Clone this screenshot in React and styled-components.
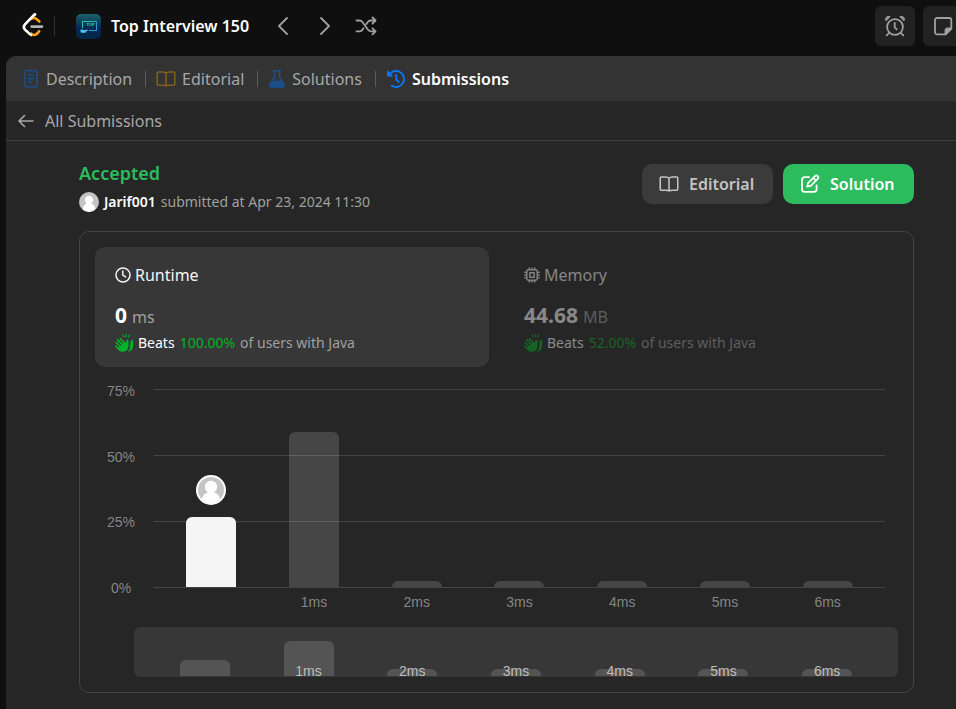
import React from "react";
import styled, { createGlobalStyle } from "styled-components";
import { FaHandsClapping } from "react-icons/fa6";

const GlobalStyle = createGlobalStyle`
  * { box-sizing: border-box; }
  body {
    margin: 0;
    background: #0f0f0f;
    color: #f5f5f5;
    font-family: "Segoe UI", "Noto Sans", "Open Sans", sans-serif;
    font-size: 16px;
    line-height: 24px;
  }
  button { font: inherit; color: inherit; background: none; border: 0; padding: 0; cursor: pointer; }
  svg { display: block; flex: none; }
`;

const Page = styled.div`
  display: flex;
  flex-direction: column;
  min-height: 100vh;
  overflow: hidden;
`;

const TopBar = styled.header`
  display: flex;
  align-items: center;
  height: 56px;
  padding: 0 0 4px 21px;
  margin-right: -7px;
`;

const LogoLink = styled.a`
  display: flex;
  padding-right: 9px;
  border-right: 1px solid #2e2e2e;
  height: 20px;
  align-items: center;
`;

const StudyPlan = styled.a`
  display: flex;
  align-items: center;
  gap: 10px;
  margin-left: 21px;
  color: #ffffff;
  font-weight: 600;
  text-decoration: none;
`;

const Pager = styled.nav`
  display: flex;
  align-items: center;
  gap: 18px;
  margin-left: 22px;
  color: #a0a0a0;
`;

const TopActions = styled.div`
  display: flex;
  gap: 8px;
  margin-left: auto;
`;

const ToolButton = styled.button`
  display: grid;
  place-items: center;
  width: 40px;
  height: 40px;
  border-radius: 6px;
  background: #222222;
  color: #a0a0a0;
`;

const Panel = styled.main`
  flex: 1;
  margin-left: 6px;
  border-top-left-radius: 10px;
  background: #262626;
  overflow: hidden;
`;

const Tabs = styled.nav`
  display: flex;
  align-items: center;
  height: 45px;
  padding: 1px 0 0 16px;
  background: #333333;
`;

const Tab = styled.button`
  display: flex;
  align-items: center;
  gap: 6px;
  height: 24px;
  color: ${(p) => (p.$active ? "#ffffff" : "#a8a8a8")};
  font-weight: ${(p) => (p.$active ? 600 : 400)};
`;

const TabDivider = styled.span`
  width: 1px;
  height: 16px;
  margin: 0 10px 0 13px;
  background: #5c5c5c;
`;

const BackRow = styled.div`
  display: flex;
  align-items: center;
  height: 40px;
  padding: 1px 0 0 10px;
  border-bottom: 1px solid #3e3e3e;
  color: #a8a8a8;
`;

const BackButton = styled.button`
  display: flex;
  align-items: center;
  gap: 9px;
`;

const Content = styled.section`
  padding: 20px 42px 16px 73px;
`;

const ResultHeader = styled.div`
  display: flex;
  align-items: flex-start;
  justify-content: space-between;
  height: 52px;
`;

const Status = styled.h1`
  margin: 0;
  color: #2cbb5d;
  font-size: 18px;
  font-weight: 600;
  line-height: 24px;
`;

const Submitter = styled.div`
  display: flex;
  align-items: center;
  gap: 5px;
  height: 34px;
  color: #a0a0a0;
  font-size: 14px;
`;

const UserLink = styled.a`
  color: #ffffff;
  font-weight: 600;
  text-decoration: none;
`;

const ResultActions = styled.div`
  display: flex;
  gap: 10px;
  padding-top: 3px;
`;

const ActionButton = styled.button`
  display: flex;
  align-items: center;
  gap: 10px;
  width: 131px;
  height: 40px;
  padding: 0 17px;
  border-radius: 10px;
  background: ${(p) => (p.$primary ? "#2cbb5d" : "#3b3b3b")};
  color: ${(p) => (p.$primary ? "#ffffff" : "#c4c4c4")};
  font-weight: 600;
`;

const StatsCard = styled.div`
  margin-top: 18px;
  padding: 15px;
  border: 1px solid #434343;
  border-radius: 10px;
`;

const Metrics = styled.div`
  display: grid;
  grid-template-columns: 1fr 1fr;
  gap: 15px;
`;

const Metric = styled.button`
  display: flex;
  flex-direction: column;
  height: 120px;
  padding: 16px 20px 8px;
  border-radius: 10px;
  background: ${(p) => (p.$active ? "#373737" : "transparent")};
  text-align: left;
`;

const MetricBody = styled.span`
  display: flex;
  flex-direction: column;
  opacity: ${(p) => (p.$dim ? 0.45 : 1)};
`;

const MetricTitle = styled.span`
  display: flex;
  align-items: center;
  gap: 4px;
  height: 24px;
`;

const MetricValue = styled.span`
  display: flex;
  align-items: baseline;
  gap: 5px;
  margin-top: 14px;
  height: 28px;
  color: #a0a0a0;
  line-height: 28px;
`;

const Amount = styled.strong`
  color: #ffffff;
  font-size: 21px;
  font-weight: 700;
`;

const Beats = styled.span`
  display: flex;
  align-items: center;
  gap: 5px;
  height: 28px;
  color: #a0a0a0;
  font-size: 14px;
`;

const BeatsLabel = styled.span`
  color: #ffffff;
`;

const Percent = styled.span`
  color: #02b128;
`;

const ClapIcon = styled(FaHandsClapping)`
  width: 18px;
  height: 18px;
  color: #02b128;
`;

const Chart = styled.div`
  display: grid;
  grid-template-columns: 52px 1fr;
  column-gap: 7px;
  margin: 22px 13px 0 0;
  font-family: "Liberation Sans", Arial, sans-serif;
  font-size: 14px;
  line-height: 16px;
  color: #858585;
`;

const YAxis = styled.div`
  display: flex;
  flex-direction: column;
  justify-content: space-between;
  align-items: center;
  height: 213px;
  margin-top: -6px;
`;

const Plot = styled.div`
  display: grid;
  height: 199px;
`;

const GridLines = styled.div`
  grid-area: 1 / 1;
  display: flex;
  flex-direction: column;
  justify-content: space-between;
`;

const GridLine = styled.div`
  height: 1px;
  background: #444444;
`;

const Bars = styled.div`
  grid-area: 1 / 1;
  display: grid;
  grid-template-columns: repeat(7, 1fr);
  padding: 0 6px 1px;
  z-index: 1;
`;

const BarSlot = styled.div`
  display: flex;
  flex-direction: column;
  align-items: center;
  justify-content: flex-end;
  gap: 12px;
`;

const Bar = styled.div`
  width: 50px;
  border-radius: 6px 6px 0 0;
  background: ${(p) => (p.$mine ? "#f5f5f5" : "rgba(255, 255, 255, 0.15)")};
`;

const XAxis = styled.div`
  grid-column: 2;
  display: grid;
  grid-template-columns: repeat(7, 1fr);
  padding: 0 6px;
  margin-top: -2px;
  text-align: center;
`;

const Brush = styled.div`
  display: grid;
  grid-template-columns: repeat(7, 1fr);
  height: 50px;
  margin: 17px 0 0 39px;
  padding: 0 19px 1px;
  border-radius: 6px;
  background: #373737;
`;

const BrushSlot = styled.div`
  display: grid;
  justify-items: center;
  align-items: end;
  height: 49px;
`;

const BrushBar = styled(Bar)`
  grid-area: 1 / 1;
`;

const BrushLabel = styled.span`
  grid-area: 1 / 1;
  z-index: 1;
  color: #bdbdbd;
  font-family: "Liberation Sans", Arial, sans-serif;
  font-size: 14px;
  line-height: 10px;
`;

const stroke = (width) => ({
  fill: "none",
  stroke: "currentColor",
  strokeWidth: width,
  strokeLinecap: "round",
  strokeLinejoin: "round",
});

const LogoIcon = () => (
  <svg width="24" height="26" viewBox="0 0 24 26" fill="none" strokeWidth="2.6" strokeLinecap="round">
    <path d="M10.2 6c1.7-1.2 3.8-1.1 5.2 0l3 2.5" stroke="#ffa116" />
    <path d="M18.2 18.2l-2 2.3c-1.7 1.7-4.3 1.9-6 .2" stroke="#ffa116" />
    <path d="M14 .9 4 11.4c-1.5 1.7-1.5 3.6 0 5.2l4.6 4.3c.7.7 1.5 1.1 2.4 1.3" stroke="#ffffff" strokeLinecap="butt" />
    <path d="M14.1 1.4 13.2 2.2" stroke="#ffffff" />
    <path d="M10.6 13.6h10.4" stroke="#b3b3b3" />
  </svg>
);

const PlanIcon = () => (
  <svg width="25" height="25" viewBox="0 0 25 25" fill="none">
    <defs>
      <linearGradient id="planBg" x1="0" y1="0" x2="0" y2="1">
        <stop offset="0" stopColor="#1b6269" />
        <stop offset="0.55" stopColor="#052a4f" />
        <stop offset="1" stopColor="#02264a" />
      </linearGradient>
      <linearGradient id="planFg" x1="0" y1="0" x2="1" y2="0.5">
        <stop offset="0" stopColor="#35d0a0" />
        <stop offset="1" stopColor="#2c96dd" />
      </linearGradient>
    </defs>
    <rect width="25" height="25" rx="5" fill="url(#planBg)" />
    <path d="M6.5 14V7.5h14v9h-7.5" stroke="url(#planFg)" />
    <path d="M4.5 15.5h2l2 .7 2.5-.7 1 1-2.3 1.2v1H5.2l-.7-1.2z" fill="#4fc4ee" />
    <text x="10.5" y="12" fontFamily="Liberation Sans, Arial, sans-serif" fontSize="4" fontWeight="700" fill="#35d0a0">TOP</text>
  </svg>
);

const ChevronIcon = ({ right }) => (
  <svg width="24" height="24" viewBox="0 0 24 24" {...stroke(1.8)}>
    <path d={right ? "M8 4 16 12 8 20" : "M16 4 8 12 16 20"} />
  </svg>
);

const ShuffleIcon = () => (
  <svg width="22" height="20" viewBox="0 0 22 20" {...stroke(1.8)}>
    <path d="M1.5 4.5h3c1.4 0 2.3.6 3.1 1.7l5.2 7.4c.8 1.2 1.8 1.7 3.2 1.7h4.3" />
    <path d="M1.5 15.3h3c1.4 0 2.3-.6 3.1-1.7l.9-1.3M11.2 8.2l1.4-2c.8-1.1 1.8-1.7 3.2-1.7h4.5" />
    <path d="m17.5 1.5 3 3-3 3M17.5 12.3l3 3-3 3" />
  </svg>
);

const AlarmIcon = () => (
  <svg width="22" height="22" viewBox="0 0 22 22" {...stroke(1.8)}>
    <circle cx="11" cy="12" r="7.9" />
    <path d="M10.7 7.8v4.6l2 2M5 18l-2.3 2.4M17 18l2.3 2.4" />
    <path d="M1.8 5.5C.8 3 2.9.7 5.8 1.6zM20.2 5.5c1-2.5-1.1-4.8-4-3.9z" fill="currentColor" strokeWidth="1" />
  </svg>
);

const NoteIcon = () => (
  <svg width="20" height="20" viewBox="0 0 20 20" {...stroke(1.8)}>
    <path d="M12.5 18.3H4A2 2 0 0 1 2 16.3V4a2 2 0 0 1 2-2h12.3a2 2 0 0 1 2 2v8.5z" />
    <path d="M12.5 18.3v-4a1.8 1.8 0 0 1 1.8-1.8h4z" fill="currentColor" />
  </svg>
);

const DocumentIcon = () => (
  <svg width="18" height="20" viewBox="0 0 18 20" {...stroke(1.6)} color="#1b4f8b">
    <rect x="3" y="1.5" width="12" height="16.5" rx="2" />
    <path d="M6 6h6M6 9.5h6M6 13h3.5" />
  </svg>
);

const BookIcon = ({ color }) => (
  <svg width="20" height="18" viewBox="0 0 21 18" {...stroke(1.6)} color={color}>
    <path d="M10.5 3C9.8 2 8.5 1.7 7 1.7H2.3a1 1 0 0 0-1 1v11.8a1 1 0 0 0 1 1H7c1.5 0 2.8.1 3.5.9.7-.8 2-.9 3.5-.9h4.7a1 1 0 0 0 1-1V2.7a1 1 0 0 0-1-1H14c-1.5 0-2.8.3-3.5 1.3zv13.2" />
  </svg>
);

const FlaskIcon = () => (
  <svg width="18" height="20" viewBox="0 0 18 20" {...stroke(1.6)} color="#1b4f8b">
    <path d="M5.5 1.8h7M6.5 2v6.2L2 15.6a1.6 1.6 0 0 0 1.4 2.4h11.2a1.6 1.6 0 0 0 1.4-2.4L11.5 8.2V2" />
    <path d="M4.2 12.5h9.6l2 3.3c.6 1-.1 2.2-1.2 2.2H3.4c-1.1 0-1.8-1.2-1.2-2.2z" fill="currentColor" />
  </svg>
);

const HistoryIcon = () => (
  <svg width="20" height="20" viewBox="0 0 20 20" {...stroke(1.8)} color="#007bff">
    <path d="M3.2 5.9A8 8 0 1 1 5.6 16.6" />
    <path d="M10.2 6v4.6l2.6 2.4" />
    <path d="M1.6 2.2v4.6h4.6z" fill="currentColor" strokeWidth="1.2" />
  </svg>
);

const ArrowLeftIcon = () => (
  <svg width="20" height="18" viewBox="0 0 20 18" {...stroke(1.6)}>
    <path d="M17 9H3.5M8.5 3.5 3 9l5.5 5.5" />
  </svg>
);

const EditIcon = () => (
  <svg width="20" height="20" viewBox="0 0 20 20" {...stroke(1.8)}>
    <path d="M9 3.2H4.5a2.5 2.5 0 0 0-2.5 2.5v9.6a2.5 2.5 0 0 0 2.5 2.5h9.6a2.5 2.5 0 0 0 2.5-2.5v-4" />
    <path d="m7.2 12.7.8-3.6 7-7a1.9 1.9 0 0 1 2.7 2.7l-7 7zM13.3 4l2.6 2.6" />
  </svg>
);

const ClockIcon = () => (
  <svg width="16" height="16" viewBox="0 0 16 16" {...stroke(1.5)}>
    <circle cx="8" cy="8" r="7" />
    <path d="M7.8 4v4.2l2.8 1.7" />
  </svg>
);

const ChipIcon = () => (
  <svg width="16" height="16" viewBox="0 0 16 16" {...stroke(1.4)}>
    <rect x="2.8" y="2.8" width="10.4" height="10.4" rx="1.6" />
    <rect x="5.8" y="5.8" width="4.4" height="4.4" />
    <path d="M5.2.9v1.4M8 .9v1.4M10.8.9v1.4M5.2 13.7v1.4M8 13.7v1.4M10.8 13.7v1.4M.9 5.2h1.4M.9 8h1.4M.9 10.8h1.4M13.7 5.2h1.4M13.7 8h1.4M13.7 10.8h1.4" />
  </svg>
);

const Avatar = ({ size, ringed, clip }) => (
  <svg width={size} height={size} viewBox="0 0 30 30">
    <defs>
      <clipPath id={clip}>
        <circle cx="15" cy="15" r={ringed ? 13 : 15} />
      </clipPath>
    </defs>
    {ringed && <circle cx="15" cy="15" r="15" fill="#ffffff" />}
    <g clipPath={`url(#${clip})`}>
      <rect width="30" height="30" fill="#c4c4c4" />
      <circle cx="15" cy="12" r="6.2" fill="#ffffff" />
      <path d="M5.5 27c0-6.5 4-10 9.5-10s9.5 3.5 9.5 10v3h-19z" fill="#ffffff" />
    </g>
  </svg>
);

const distribution = [
  { label: "", height: 70, brush: 16, mine: true },
  { label: "1ms", height: 155, brush: 35 },
  { label: "2ms", height: 6, brush: 7 },
  { label: "3ms", height: 6, brush: 7 },
  { label: "4ms", height: 6, brush: 7 },
  { label: "5ms", height: 6, brush: 7 },
  { label: "6ms", height: 6, brush: 7 },
];

const ticks = ["75%", "50%", "25%", "0%"];

const MetricTile = ({ icon, title, amount, unit, percent, active }) => (
  <Metric type="button" $active={active} aria-pressed={Boolean(active)}>
    <MetricBody $dim={!active}>
      <MetricTitle>
        {icon}
        {title}
      </MetricTitle>
      <MetricValue>
        <Amount>{amount}</Amount>
        {unit}
      </MetricValue>
      <Beats>
        <ClapIcon />
        <BeatsLabel>Beats</BeatsLabel>
        <Percent>{percent}</Percent>
        <span>of users with Java</span>
      </Beats>
    </MetricBody>
  </Metric>
);

export default function App() {
  return (
    <Page>
      <GlobalStyle />
      <TopBar>
        <LogoLink href="#" aria-label="Home">
          <LogoIcon />
        </LogoLink>
        <StudyPlan href="#">
          <PlanIcon />
          Top Interview 150
        </StudyPlan>
        <Pager>
          <button type="button" aria-label="Previous problem"><ChevronIcon /></button>
          <button type="button" aria-label="Next problem"><ChevronIcon right /></button>
          <button type="button" aria-label="Random problem"><ShuffleIcon /></button>
        </Pager>
        <TopActions>
          <ToolButton type="button" aria-label="Timer"><AlarmIcon /></ToolButton>
          <ToolButton type="button" aria-label="Notes"><NoteIcon /></ToolButton>
        </TopActions>
      </TopBar>
      <Panel>
        <Tabs>
          <Tab type="button"><DocumentIcon />Description</Tab>
          <TabDivider />
          <Tab type="button"><BookIcon color="#80601a" />Editorial</Tab>
          <TabDivider />
          <Tab type="button"><FlaskIcon />Solutions</Tab>
          <TabDivider />
          <Tab type="button" $active><HistoryIcon />Submissions</Tab>
        </Tabs>
        <BackRow>
          <BackButton type="button"><ArrowLeftIcon />All Submissions</BackButton>
        </BackRow>
        <Content>
          <ResultHeader>
            <div>
              <Status>Accepted</Status>
              <Submitter>
                <Avatar size={20} clip="userAvatar" />
                <UserLink href="#">Jarif001</UserLink>
                <span>submitted at Apr 23, 2024 11:30</span>
              </Submitter>
            </div>
            <ResultActions>
              <ActionButton type="button"><BookIcon />Editorial</ActionButton>
              <ActionButton type="button" $primary><EditIcon />Solution</ActionButton>
            </ResultActions>
          </ResultHeader>
          <StatsCard>
            <Metrics>
              <MetricTile icon={<ClockIcon />} title="Runtime" amount="0" unit="ms" percent="100.00%" active />
              <MetricTile icon={<ChipIcon />} title="Memory" amount="44.68" unit="MB" percent="52.00%" />
            </Metrics>
            <Chart>
              <YAxis>
                {ticks.map((tick) => <span key={tick}>{tick}</span>)}
              </YAxis>
              <Plot>
                <GridLines>
                  {ticks.map((tick) => <GridLine key={tick} />)}
                </GridLines>
                <Bars>
                  {distribution.map((d) => (
                    <BarSlot key={d.label}>
                      {d.mine && <Avatar size={30} ringed clip="barAvatar" />}
                      <Bar $mine={d.mine} style={{ height: d.height }} />
                    </BarSlot>
                  ))}
                </Bars>
              </Plot>
              <XAxis>
                {distribution.map((d) => <span key={d.label}>{d.label}</span>)}
              </XAxis>
            </Chart>
            <Brush>
              {distribution.map((d) => (
                <BrushSlot key={d.label}>
                  <BrushBar style={{ height: d.brush }} />
                  <BrushLabel>{d.label}</BrushLabel>
                </BrushSlot>
              ))}
            </Brush>
          </StatsCard>
        </Content>
      </Panel>
    </Page>
  );
}
